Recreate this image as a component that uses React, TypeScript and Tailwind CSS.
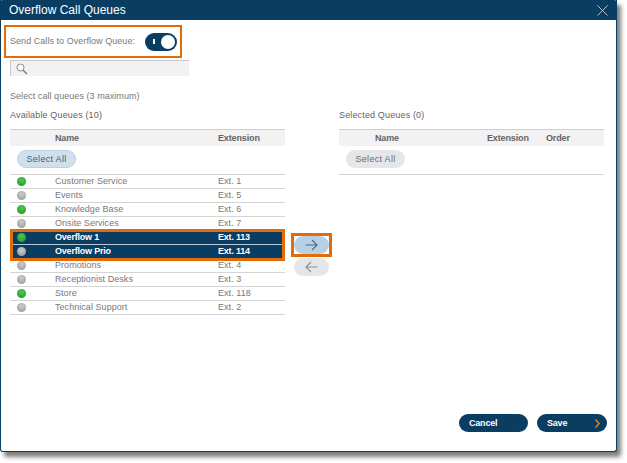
import React from "react";

const rows = [
  { name: "Customer Service", ext: "Ext. 1", on: true },
  { name: "Events", ext: "Ext. 5", on: false },
  { name: "Knowledge Base", ext: "Ext. 6", on: true },
  { name: "Onsite Services", ext: "Ext. 7", on: false },
  { name: "Overflow 1", ext: "Ext. 113", on: true, sel: true },
  { name: "Overflow Prio", ext: "Ext. 114", on: false, sel: true },
  { name: "Promotions", ext: "Ext. 4", on: false },
  { name: "Receptionist Desks", ext: "Ext. 3", on: false },
  { name: "Store", ext: "Ext. 118", on: true },
  { name: "Technical Support", ext: "Ext. 2", on: false },
];

function Dot({ on }: { on: boolean }) {
  return (
    <span
      className={
        on
          ? "block w-[9px] h-[9px] rounded-full bg-[radial-gradient(circle_at_50%_35%,#4fca4f,#17912a)]"
          : "block w-[9px] h-[9px] rounded-full bg-[radial-gradient(circle_at_50%_35%,#cccccc,#949494)]"
      }
    />
  );
}

function Arrow({ dir, color }: { dir: "l" | "r"; color: string }) {
  return (
    <svg width="13" height="12" viewBox="0 0 13 12" fill="none" stroke={color} strokeWidth="1.1">
      {dir === "r" ? <path d="M0.5 6H12M7 1L12 6L7 11" /> : <path d="M12.5 6H1M6 1L1 6L6 11" />}
    </svg>
  );
}

export default function App() {
  return (
    <div className="w-[627px] h-[463px] bg-white overflow-hidden font-['Liberation_Sans',Arial,sans-serif] text-[9px] tracking-[0.05px] text-[#77787b]">
      <div className="relative flex flex-col w-[617px] h-[452px] bg-white border-x border-b border-[#0a3d62] rounded-b-[3px] shadow-[4px_5px_4px_#7f7f7f]">
        <div className="flex items-center justify-between h-[20px] shrink-0 -mx-px bg-[#0a3d62] rounded-t-[3px] pl-[9px] pr-[9px] text-white">
          <span className="text-[12px] tracking-normal leading-none">Overflow Call Queues</span>
          <svg width="11" height="11" viewBox="0 0 11 11" stroke="#dfe7ee" strokeWidth="0.8">
            <path d="M0.5 0.5L10.5 10.5M10.5 0.5L0.5 10.5" />
          </svg>
        </div>

        <div className="flex items-center h-[33px] w-[178px] mt-[5px] ml-[3px] border-2 border-[#e36c0a] pl-[4px] pr-[3px] justify-between shrink-0">
          <span className="whitespace-nowrap">Send Calls to Overflow Queue:</span>
          <span className="flex items-center justify-between w-[32px] h-[18px] rounded-full bg-[#0a3d62] pl-[8px] pr-[2px]">
            <span className="w-[1.5px] h-[5px] bg-white" />
            <span className="w-[14px] h-[14px] rounded-full bg-white" />
          </span>
        </div>

        <div className="flex items-center w-[179px] h-[16px] mt-[2px] ml-[9px] bg-[#f3f1f1] border-l border-t border-[#c9c9c9] pl-[5px] shrink-0">
          <svg width="12" height="12" viewBox="0 0 12 12" fill="none" stroke="#7d7d7d">
            <circle cx="4.5" cy="4.5" r="3.5" fill="#fff" strokeWidth="0.9" />
            <path d="M7.2 7.2L11 11" strokeWidth="1.5" />
          </svg>
        </div>

        <div className="ml-[9px] mt-[15px] h-[10px] leading-[10px]">Select call queues (3 maximum)</div>

        <div className="flex flex-1 mt-[9px] ml-[9px]">
          <div className="w-[275px]">
            <div className="h-[10px] leading-[10px] tracking-[0.15px] text-[#636466]">Available Queues (10)</div>
            <div className="flex items-center h-[17px] mt-[9px] pt-[1px] bg-[#f3f1f1] border-t border-[#cfcfcf] font-bold tracking-[-0.14px] text-[#636466]">
              <span className="w-[45px]" />
              <span className="w-[163px]">Name</span>
              <span>Extension</span>
            </div>
            <div className="h-[29px] pl-[7px] pt-[4px] border-b border-[#d4d4d4]">
              <button className="block w-[59px] h-[18px] rounded-full bg-[#cfe0ec] border border-[#bcd2e1] tracking-[0.3px] text-[#3f5f75] leading-none">
                Select All
              </button>
            </div>
            <div className="relative">
              {rows.map((r) => (
                <div
                  key={r.name}
                  className={
                    r.sel
                      ? "flex items-center h-[14px] border-b border-[#b9c9d6] bg-[#0a3d62] text-white font-bold tracking-[-0.2px]"
                      : "flex items-center h-[14px] border-b border-[#d4d4d4]"
                  }
                >
                  <span className="w-[45px] pl-[7px]">
                    <Dot on={r.on} />
                  </span>
                  <span className="w-[163px] whitespace-nowrap">{r.name}</span>
                  <span>{r.ext}</span>
                </div>
              ))}
              <div className="absolute left-0 right-0 top-[54px] h-[32px] border-[3px] border-[#e36c0a]" />
            </div>
          </div>

          <div className="relative w-[54px] pl-[9px] pt-[126px]">
            <button className="flex items-center justify-center w-[35px] h-[18px] rounded-full bg-[#b9d0e2]">
              <Arrow dir="r" color="#3f6a8a" />
            </button>
            <button className="flex items-center justify-center w-[35px] h-[18px] mt-[4px] rounded-full bg-[#e4e6e8]">
              <Arrow dir="l" color="#8c8f92" />
            </button>
            <div className="absolute left-[6px] top-[123px] w-[41px] h-[24px] border-[3px] border-[#e36c0a]" />
          </div>

          <div className="w-[265px]">
            <div className="h-[10px] leading-[10px] tracking-[0.15px] text-[#636466]">Selected Queues (0)</div>
            <div className="flex items-center h-[17px] mt-[9px] pt-[1px] bg-[#f3f1f1] border-t border-[#cfcfcf] font-bold tracking-[-0.14px] text-[#636466]">
              <span className="w-[36px]" />
              <span className="w-[112px]">Name</span>
              <span className="w-[59px]">Extension</span>
              <span>Order</span>
            </div>
            <div className="h-[29px] pl-[7px] pt-[4px] border-b border-[#d4d4d4]">
              <button className="block w-[59px] h-[18px] rounded-full bg-[#e4e6e8] tracking-[0.3px] text-[#6a6b6e] leading-none">
                Select All
              </button>
            </div>
          </div>
        </div>

        <div className="flex justify-end gap-[9px] pr-[9px] pb-[19px] font-bold tracking-[-0.2px] text-white">
          <button className="w-[69px] h-[18px] rounded-full bg-[#0a3d62] text-left pl-[10px] leading-none">Cancel</button>
          <button className="flex items-center justify-between w-[70px] h-[18px] rounded-full bg-[#0a3d62] pl-[10px] pr-[7px] leading-none">
            <span>Save</span>
            <svg width="5" height="9" viewBox="0 0 5 9" fill="none" stroke="#f0902a" strokeWidth="1.2">
              <path d="M0.5 0.5L4.2 4.5L0.5 8.5" />
            </svg>
          </button>
        </div>
      </div>
    </div>
  );
}
